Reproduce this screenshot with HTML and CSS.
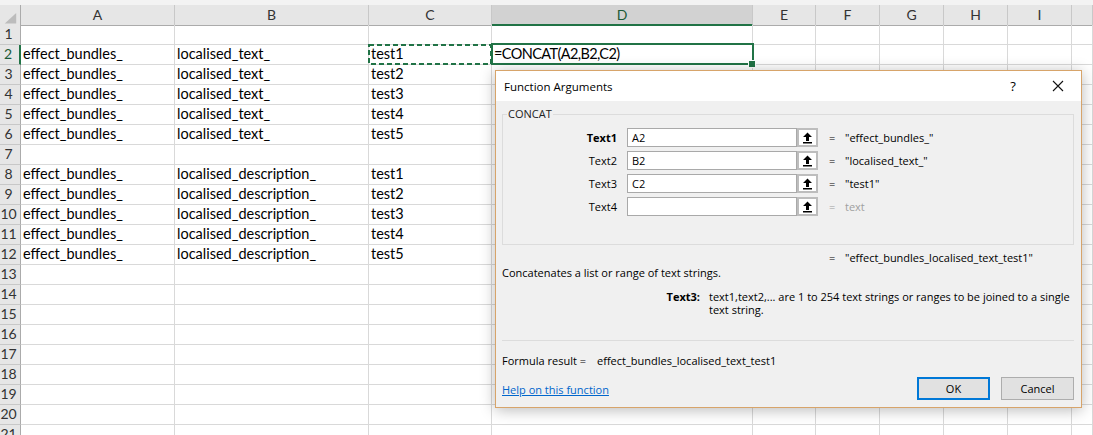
FILE: index.html
```html
<!DOCTYPE html>
<html>
<head>
<meta charset="utf-8">
<link rel="stylesheet" href="styles.css">
</head>
<body>
<div class="topband"></div>
<div class="sheet">
  <div class="row hdr">
    <div class="corner"><svg width="21" height="20" viewBox="0 0 21 20"><polygon points="5,19 17,19 17,8" fill="#bcbcbc"/></svg></div>
    <div>A</div><div>B</div><div>C</div><div class="active">D</div><div>E</div><div>F</div><div>G</div><div>H</div><div>I</div><div></div>
  </div>
  <div class="row"><div class="rh">1</div><div></div><div></div><div></div><div></div><div></div><div></div><div></div><div></div><div></div><div></div></div>
  <div class="row"><div class="rh active">2</div><div>effect_bundles_</div><div>localised_text_</div><div class="copy">test1<svg class="ants" width="124" height="21" viewBox="0 0 124 21"><rect x="1" y="1" width="122" height="19" fill="none" stroke="#217346" stroke-width="2" stroke-dasharray="5 3"/></svg></div><div class="sel"><span class="formula">=CONCAT(A2,B2,C2)</span><span class="selbox"><span class="handle"></span></span></div><div></div><div></div><div></div><div></div><div></div><div></div></div>
  <div class="row"><div class="rh">3</div><div>effect_bundles_</div><div>localised_text_</div><div>test2</div><div></div><div></div><div></div><div></div><div></div><div></div><div></div></div>
  <div class="row"><div class="rh">4</div><div>effect_bundles_</div><div>localised_text_</div><div>test3</div><div></div><div></div><div></div><div></div><div></div><div></div><div></div></div>
  <div class="row"><div class="rh">5</div><div>effect_bundles_</div><div>localised_text_</div><div>test4</div><div></div><div></div><div></div><div></div><div></div><div></div><div></div></div>
  <div class="row"><div class="rh">6</div><div>effect_bundles_</div><div>localised_text_</div><div>test5</div><div></div><div></div><div></div><div></div><div></div><div></div><div></div></div>
  <div class="row"><div class="rh">7</div><div></div><div></div><div></div><div></div><div></div><div></div><div></div><div></div><div></div><div></div></div>
  <div class="row"><div class="rh">8</div><div>effect_bundles_</div><div>localised_description_</div><div>test1</div><div></div><div></div><div></div><div></div><div></div><div></div><div></div></div>
  <div class="row"><div class="rh">9</div><div>effect_bundles_</div><div>localised_description_</div><div>test2</div><div></div><div></div><div></div><div></div><div></div><div></div><div></div></div>
  <div class="row"><div class="rh">10</div><div>effect_bundles_</div><div>localised_description_</div><div>test3</div><div></div><div></div><div></div><div></div><div></div><div></div><div></div></div>
  <div class="row"><div class="rh">11</div><div>effect_bundles_</div><div>localised_description_</div><div>test4</div><div></div><div></div><div></div><div></div><div></div><div></div><div></div></div>
  <div class="row"><div class="rh">12</div><div>effect_bundles_</div><div>localised_description_</div><div>test5</div><div></div><div></div><div></div><div></div><div></div><div></div><div></div></div>
  <div class="row"><div class="rh">13</div><div></div><div></div><div></div><div></div><div></div><div></div><div></div><div></div><div></div><div></div></div>
  <div class="row"><div class="rh">14</div><div></div><div></div><div></div><div></div><div></div><div></div><div></div><div></div><div></div><div></div></div>
  <div class="row"><div class="rh">15</div><div></div><div></div><div></div><div></div><div></div><div></div><div></div><div></div><div></div><div></div></div>
  <div class="row"><div class="rh">16</div><div></div><div></div><div></div><div></div><div></div><div></div><div></div><div></div><div></div><div></div></div>
  <div class="row"><div class="rh">17</div><div></div><div></div><div></div><div></div><div></div><div></div><div></div><div></div><div></div><div></div></div>
  <div class="row"><div class="rh">18</div><div></div><div></div><div></div><div></div><div></div><div></div><div></div><div></div><div></div><div></div></div>
  <div class="row"><div class="rh">19</div><div></div><div></div><div></div><div></div><div></div><div></div><div></div><div></div><div></div><div></div></div>
  <div class="row"><div class="rh">20</div><div></div><div></div><div></div><div></div><div></div><div></div><div></div><div></div><div></div><div></div></div>
  <div class="row"><div class="rh">21</div><div></div><div></div><div></div><div></div><div></div><div></div><div></div><div></div><div></div><div></div></div>
</div>

<div class="dialog">
  <div class="titlebar">
    <span class="title">Function Arguments</span>
    <span class="tbtn help">?</span>
    <span class="tbtn close"><svg width="12" height="12" viewBox="0 0 12 12"><path d="M1 1 L11 11 M11 1 L1 11" stroke="#111" stroke-width="1.1" fill="none"/></svg></span>
  </div>
  <div class="dbody">
    <div class="group">
      <span class="legend">CONCAT</span>
      <div class="arg"><span class="alabel bold">Text1</span><span class="ainput">A2</span><span class="refbtn"><svg width="11" height="12" viewBox="0 0 11 12"><path d="M5.5 0.5 L10 5 H7 V9 H4 V5 H1 Z" fill="#000"/><rect x="1" y="10" width="9" height="1.5" fill="#000"/></svg></span><span class="eq">=</span><span class="aval">"effect_bundles_"</span></div>
      <div class="arg"><span class="alabel">Text2</span><span class="ainput">B2</span><span class="refbtn"><svg width="11" height="12" viewBox="0 0 11 12"><path d="M5.5 0.5 L10 5 H7 V9 H4 V5 H1 Z" fill="#000"/><rect x="1" y="10" width="9" height="1.5" fill="#000"/></svg></span><span class="eq">=</span><span class="aval">"localised_text_"</span></div>
      <div class="arg"><span class="alabel">Text3</span><span class="ainput">C2</span><span class="refbtn"><svg width="11" height="12" viewBox="0 0 11 12"><path d="M5.5 0.5 L10 5 H7 V9 H4 V5 H1 Z" fill="#000"/><rect x="1" y="10" width="9" height="1.5" fill="#000"/></svg></span><span class="eq">=</span><span class="aval">"test1"</span></div>
      <div class="arg"><span class="alabel">Text4</span><span class="ainput"></span><span class="refbtn"><svg width="11" height="12" viewBox="0 0 11 12"><path d="M5.5 0.5 L10 5 H7 V9 H4 V5 H1 Z" fill="#000"/><rect x="1" y="10" width="9" height="1.5" fill="#000"/></svg></span><span class="eq dim">=</span><span class="aval dim">text</span></div>
    </div>
    <div class="result"><span class="eq">=</span><span>"effect_bundles_localised_text_test1"</span></div>
    <div class="desc">Concatenates a list or range of text strings.</div>
    <div class="argdesc"><span class="adl">Text3:</span><span class="adt">text1,text2,... are 1 to 254 text strings or ranges to be joined to a single<br>text string.</span></div>
    <div class="sep"></div>
    <div class="fres"><span class="frl">Formula result =</span><span>effect_bundles_localised_text_test1</span></div>
    <div class="footer">
      <a class="helplink">Help on this function</a>
      <div class="btns"><span class="btn ok">OK</span><span class="btn">Cancel</span></div>
    </div>
  </div>
</div>
</body>
</html>
```

FILE: styles.css
```css
html, body {
  margin: 0;
  padding: 0;
}
body {
  width: 1093px;
  height: 435px;
  overflow: hidden;
  position: relative;
  background: #ffffff;
  font-family: Lato, "Liberation Sans", sans-serif;
  font-size: 14.5px;
  color: #000;
}
.topband {
  height: 5px;
  background: #f3f3f3;
}
.row {
  display: grid;
  grid-template-columns: 21px 154px 194px 123px 261px 63px 64px 64px 64px 64px 1fr;
  height: 20px;
}
.row > div {
  box-sizing: border-box;
  border-right: 1px solid #d9d9d9;
  border-bottom: 1px solid #d9d9d9;
  padding-left: 2px;
  padding-bottom: 1px;
  display: flex;
  align-items: flex-end;
  line-height: 18px;
  white-space: nowrap;
  position: relative;
}
.formula {
  letter-spacing: -0.6px;
}
.hdr > div {
  background: #e6e6e6;
  border-right-color: #c8c8c8;
  border-bottom-color: #ababab;
  justify-content: center;
  align-items: center;
  padding: 0;
  color: #333;
  font-size: 14px;
}
.hdr > div.corner {
  border-right-color: #ababab;
  padding: 0;
  align-items: stretch;
  justify-content: stretch;
}
.hdr > div.active {
  background: #d2d2d2;
  border-bottom: 2px solid #217346;
  color: #1b5a37;
}
.row > .rh {
  background: #e6e6e6;
  border-right-color: #ababab;
  border-bottom-color: #c8c8c8;
  justify-content: center;
  padding: 0 3px 1px 0;
  color: #333;
  font-size: 14px;
}
.row > .rh.active {
  border-right: 2px solid #217346;
  color: #1b5a37;
}
.ants {
  position: absolute;
  left: -1px;
  top: -1px;
  z-index: 2;
}
.selbox {
  position: absolute;
  left: -1px;
  top: -2px;
  width: 263px;
  height: 22px;
  box-sizing: border-box;
  border: 2px solid #217346;
  z-index: 3;
}
.handle {
  position: absolute;
  left: 256px;
  top: 16px;
  width: 6px;
  height: 6px;
  background: #217346;
  box-shadow: 0 0 0 1px #ffffff;
}

/* dialog */
.dialog {
  position: absolute;
  left: 495px;
  top: 70px;
  width: 587px;
  height: 338px;
  box-sizing: border-box;
  border: 1px solid #d7a46a;
  background: #f0f0f0;
  box-shadow: 0 2px 14px rgba(0, 0, 0, 0.28);
  z-index: 10;
  font-family: "Open Sans", "Noto Sans", sans-serif;
  font-size: 11px;
  color: #000;
  display: flex;
  flex-direction: column;
}
.titlebar {
  height: 30px;
  background: #ffffff;
  display: flex;
  align-items: center;
  flex: none;
}
.title {
  padding-left: 8px;
  font-size: 11.5px;
  flex: 1;
}
.tbtn {
  height: 30px;
  display: flex;
  align-items: center;
  justify-content: center;
}
.help {
  width: 44px;
  font-size: 13px;
}
.close {
  width: 46px;
}
.dbody {
  padding: 0 7px 0 6px;
  display: flex;
  flex-direction: column;
}
.group {
  margin-top: 13px;
  height: 131px;
  box-sizing: border-box;
  border: 1px solid #dcdcdc;
  position: relative;
  padding-top: 13px;
}
.legend {
  position: absolute;
  left: 4px;
  top: -9px;
  padding: 0 1px;
  background: #f0f0f0;
  line-height: 16px;
  color: #222;
}
.arg {
  display: flex;
  align-items: center;
  height: 19px;
  margin-bottom: 4px;
}
.alabel {
  width: 114px;
  text-align: right;
  margin-right: 10px;
}
.bold {
  font-weight: 700;
}
.ainput {
  width: 170px;
  height: 19px;
  box-sizing: border-box;
  border: 1px solid #a9a9a9;
  background: #fff;
  padding-left: 4px;
  line-height: 17px;
}
.refbtn {
  width: 21px;
  height: 19px;
  box-sizing: border-box;
  border: 2px solid #bdbdbd;
  background: #fff;
  display: flex;
  align-items: center;
  justify-content: center;
}
.eq {
  margin-left: 11px;
  width: 16px;
  flex: none;
}
.dim {
  color: #a0a0a0;
}
.result {
  margin-top: 5px;
  padding-left: 327px;
  display: flex;
  line-height: 15px;
}
.result .eq {
  margin-left: 0;
}
.desc {
  line-height: 15px;
}
.argdesc {
  margin-top: 10px;
  display: flex;
  line-height: 13px;
}
.adl {
  width: 198px;
  text-align: right;
  font-weight: 700;
  margin-right: 9px;
  flex: none;
}
.adt {
  white-space: nowrap;
}
.sep {
  margin-top: 24px;
  height: 1px;
  background: #dcdcdc;
}
.fres {
  margin-top: 12px;
  line-height: 15px;
  display: flex;
}
.frl {
  width: 95px;
  flex: none;
}
.footer {
  margin-top: 9px;
  display: flex;
  align-items: center;
  justify-content: space-between;
}
.helplink {
  color: #0066cc;
  text-decoration: underline;
  margin-top: 1px;
}
.btns {
  display: flex;
  gap: 11px;
}
.btn {
  width: 73px;
  height: 23px;
  box-sizing: border-box;
  border: 1px solid #adadad;
  background: #e1e1e1;
  display: flex;
  align-items: center;
  justify-content: center;
}
.btn.ok {
  border: 2px solid #0078d7;
}
```
